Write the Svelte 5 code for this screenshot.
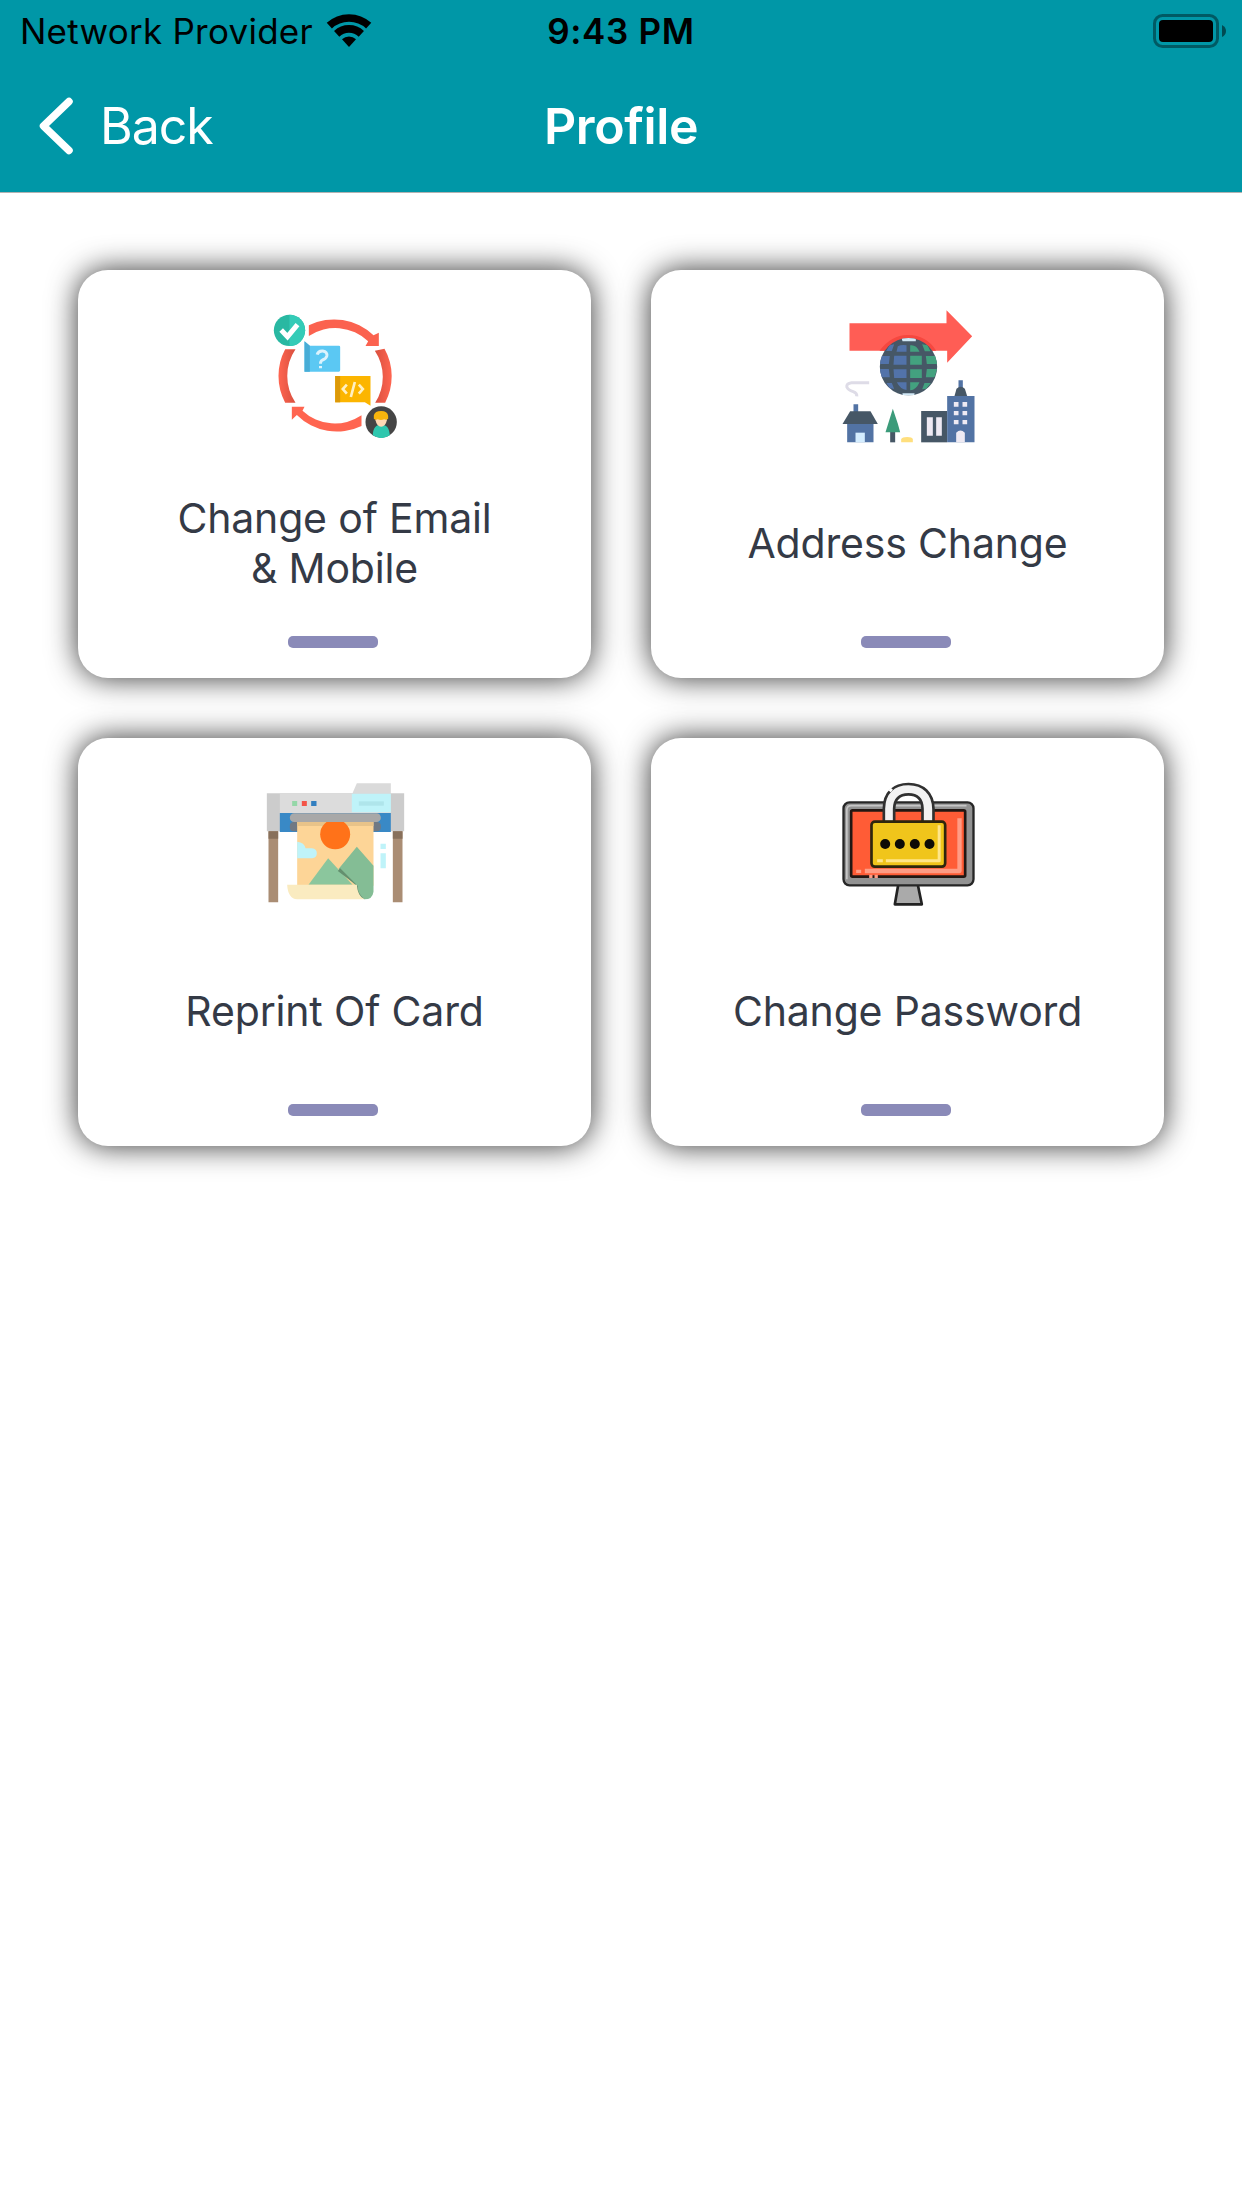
<script lang="ts">
	type Item = { id: string; lines: string[] };

	let {
		title = 'Profile',
		carrier = 'Network Provider',
		time = '9:43 PM',
		onBack = () => {}
	}: {
		title?: string;
		carrier?: string;
		time?: string;
		onBack?: () => void;
	} = $props();

	const items: Item[] = [
		{ id: 'contact', lines: ['Change of Email', '& Mobile'] },
		{ id: 'address', lines: ['Address Change'] },
		{ id: 'reprint', lines: ['Reprint Of Card'] },
		{ id: 'password', lines: ['Change Password'] }
	];
</script>

<div class="screen">
	<header class="header">
		<div class="status">
			<div class="status-left">
				<span class="carrier">{carrier}</span>
				<svg class="wifi" viewBox="978 36 138 105" fill="none" stroke="#000" stroke-width="23">
					<path d="M988 74A87 87 0 0 1 1106 74" />
					<path d="M1010 98.500A54 54 0 0 1 1084 98.500" />
					<path d="M1047 138L1026 115A31 31 0 0 1 1068 115Z" fill="#000" stroke="none" />
				</svg>
			</div>
			<span class="time">{time}</span>
			<svg class="battery" viewBox="0 0 74 34">
				<rect x="1.500" y="1.500" width="63" height="31" rx="8" fill="none" stroke="#000" stroke-opacity=".4" stroke-width="3" />
				<rect x="6" y="6" width="54" height="22" rx="4" />
				<path d="M69 11Q73 13 73 17T69 23Z" opacity=".5" />
			</svg>
		</div>

		<nav class="navbar">
			<button class="back" onclick={onBack}>
				<svg class="chevron" viewBox="0 0 34 58">
					<path d="M30 4.500L4.500 29L30 53.500" fill="none" stroke="#fff" stroke-width="7.500" stroke-linecap="round" stroke-linejoin="round" />
				</svg>
				<span>Back</span>
			</button>
			<h1 class="title">{title}</h1>
		</nav>
	</header>

	<main class="grid">
		{#each items as item (item.id)}
			<button class="card">
				{#if item.id === 'contact'}
					<svg class="icon" viewBox="-1.500 0 450 450">
						<defs>
							<linearGradient id="ringL"><stop offset="0" stop-color="#ff6550" /><stop offset="1" stop-color="#d9503f" /></linearGradient>
							<linearGradient id="ringR"><stop offset="0" stop-color="#d9503f" /><stop offset="1" stop-color="#ff6550" /></linearGradient>
						</defs>
						<path d="M77 148A170 170 0 0 0 77 308L108 308A142 142 0 0 1 108 148Z" fill="url(#ringL)" />
						<path d="M375 146A170 170 0 0 1 377 308L347 308A142 142 0 0 0 346 152Z" fill="url(#ringR)" />
						<path d="M148 76A170 170 0 0 1 342 106L358 98V138H318L326 124A142 142 0 0 0 148 108Z" fill="#fb624f" />
						<path d="M306 378A170 170 0 0 1 112 345L97 359V320H135L129 332A142 142 0 0 0 306 346Z" fill="#ff6550" />
						<circle cx="90" cy="91" r="47" fill="#29b8a2" />
						<path d="M90 44A47 47 0 0 1 90 138Z" fill="#34cbb7" />
						<path d="M65 90L84 110L114 74" fill="none" stroke="#fff" stroke-width="15" />
						<path d="M135 124L151 137H238Q242 137 242 141V211Q242 215 238 215H135Z" fill="#5bc8f3" />
						<path d="M135 124L151 137V215H135Z" fill="#48add6" />
						<path d="M173 164Q176 152 190 153Q204 155 202 168Q200 176 189 180Q183 183 183 191M183 198V205" fill="none" stroke="#dcf3fd" stroke-width="9" />
						<path d="M227 228H333V317L316 307H227Z" fill="#fcb500" />
						<path d="M227 228H242V307H227Z" fill="#dc9909" />
						<path d="M262 254L250 267L262 281M298 254L310 267L298 281M286 246L274 291" fill="none" stroke="#fff0c2" stroke-width="8" />
						<circle cx="365" cy="366" r="47" fill="#454545" />
						<path d="M340 408C340 382 350 374 365 374S390 382 391 406A47 47 0 0 1 340 406Z" fill="#2ec7ae" />
						<path d="M348 350H382V361Q378 380 365 380T348 361Z" fill="#ffd9b5" />
						<path d="M343 356V346Q346 333 365 333T386 348V356Q380 361 374 358Q364 362 355 358Q348 361 343 356Z" fill="#f8b50d" />
					</svg>
				{:else if item.id === 'address'}
					<svg class="icon" viewBox="7.500 0 450 450">
						<path d="M60 70H351V31L428 109L353 188V152H60Z" fill="#ff5d55" />
						<path d="M150 152Q188 103 237 105Q290 105 320 152Z" fill="#f6473f" />
						<circle cx="237" cy="200" r="86" fill="#465766" />
						<clipPath id="globe"><circle cx="237" cy="200" r="86" /></clipPath>
						<g clip-path="url(#globe)">
							<path d="M215 110H259V124H219ZM219 280H255V290H219Z" fill="#d2e9f6" />
							<path d="M205 139Q216 133 231 136V155H201ZM194 167H231V194H192ZM192 208H231V234H194ZM202 247H231V270Q213 269 202 247ZM151 168H181L178 192H151ZM151 207H178L181 232H151ZM171 249H187L194 267L180 264ZM180 136L194 133L187 153H170Z" fill="#5273aa" />
							<path d="M242 136Q260 133 270 155H242ZM242 167H277V194H242ZM242 208H277V234H242ZM242 247H270Q260 270 242 271ZM289 168H323V192H292ZM292 207H323L315 232H289ZM285 249H304L290 266L278 268ZM278 133L294 136L303 154H286Z" fill="#43a17f" />
						</g>
						<path d="M119 248H66Q50 250 52 261Q56 270 71 275Q83 279 82 289" fill="none" stroke="#dedce7" stroke-width="9" />
						<path d="M72 313H86V345H72ZM53 370H132V427H53Z" fill="#5273a4" />
						<path d="M39 372L62 334H123L145 372Z" fill="#465766" />
						<path d="M78 427V398H106V427Z" fill="#d4edff" />
						<path d="M182 390H197V427H182Z" fill="#465766" />
						<path d="M190 326L205 371L212 397H168L176 371Z" fill="#3c9b7a" />
						<path d="M215 427V417Q218 411 233 411T250 417V427Z" fill="#ffdf7d" />
						<path d="M275 333H353V427H275Z" fill="#465766" />
						<path d="M292 352H310V407H292ZM320 352H337V407H320Z" fill="#eeeaf3" />
						<path d="M353 288H435V427H353ZM387 241H400V267H387Z" fill="#5273a4" />
						<path d="M375 288L381 266Q394 254 406 266L413 288Z" fill="#465766" />
						<path d="M373 306H387V320H373ZM399 306H413V320H399ZM373 333H387V346H373ZM399 333H413V346H399ZM373 360H387V373H373ZM399 360H413V373H399ZM380 427V398Q393 385 406 398V427Z" fill="#eeeaf3" />
					</svg>
				{:else if item.id === 'reprint'}
					<svg class="icon" viewBox="13.500 -6 450 450">
						<path d="M294 70L307 40H409V72H294Z" fill="#dadada" />
						<path d="M37 70H449V184H37Z" fill="#ccc" />
						<path d="M76 70H409V130H76Z" fill="#dcdcdc" />
						<path d="M76 129H409V186H76Z" fill="#3989c6" />
						<path d="M292 71H409V127H292Z" fill="#bff3f9" />
						<path d="M313 94H388V107H313Z" fill="#afe5eb" />
						<path d="M113 93H128V108H113Z" fill="#94d7a8" />
						<path d="M142 93H157V108H142Z" fill="#f35448" />
						<path d="M170 93H186V108H170Z" fill="#327fc0" />
						<path d="M42 184H71V397H42ZM415 184H444V397H415Z" fill="#aa8d74" />
						<path d="M42 184H71V206H42ZM415 184H444V206H415Z" fill="#88705b" />
						<rect x="106" y="156" width="273" height="28" rx="12" fill="#707984" />
						<path d="M128 150H357V347H128Z" fill="#fdd597" />
						<path d="M128 150H357V168H128Z" fill="#e8c389" />
						<circle cx="242" cy="193" r="45" fill="#ff7219" />
						<rect x="106" y="130" width="273" height="26" rx="13" fill="#a8a8a8" />
						<path d="M128 215Q150 217 153 235H172Q187 237 187 250T173 265H128Z" fill="#bff3f9" />
						<path d="M162 344L221 265L294 344Z" fill="#8bc69d" />
						<path d="M252 297L307 230L357 287V365Q354 388 330 388Q312 386 308 350Z" fill="#84bd95" />
						<path d="M257 295L310 348Q309 371 330 388Q310 385 305 345L250 303Z" fill="#64906f" />
						<path d="M98 344H307Q309 378 330 388H128Q100 385 98 344Z" fill="#faebc0" />
						<path d="M378 221H394V237H378ZM378 250H394V295H378Z" fill="#bff3f9" />
					</svg>
				{:else}
					<svg class="icon" viewBox="7.500 -6 450 450" stroke-linejoin="round">
						<path d="M207 340H264L277 403H196Z" fill="#aaa" stroke="#222" stroke-width="8" />
						<rect x="42" y="97" width="390" height="249" rx="18" fill="#929292" stroke="#262626" stroke-width="7" />
						<path d="M52 328V119Q53 107 65 107H411" fill="none" stroke="#c7c7c7" stroke-width="5" />
						<rect x="65" y="121" width="342" height="199" rx="4" fill="#ff5c36" stroke="#221713" stroke-width="8" />
						<path d="M390 145V303H106" fill="none" stroke="#ff9c85" stroke-width="13" />
						<path d="M80 304H95M119 319H129M135 319H145" stroke="#ff9c85" stroke-width="10" />
						<path d="M163 156V116C164 67 193 42 237 42S311 69 312 117V156H279V116C278 87 263 73 237 73S195 87 194 116V156Z" fill="#f2f2f2" stroke="#303030" stroke-width="8" />
						<path d="M180 64L187 56" stroke="#fff" stroke-width="9" />
						<rect x="126" y="155" width="221" height="135" rx="10" fill="#f0c51b" stroke="#2e260d" stroke-width="8" />
						<path d="M329 166V272H169M143 272H160" fill="none" stroke="#ffe68a" stroke-width="9" />
						<g fill="#0d0b06">
							<circle cx="167" cy="222" r="15" />
							<circle cx="211" cy="222" r="15" />
							<circle cx="256" cy="222" r="15" />
							<circle cx="300" cy="222" r="15" />
						</g>
					</svg>
				{/if}
				<span class="label">
					{#each item.lines as line}
						<span>{line}</span>
					{/each}
				</span>
				<span class="bar"></span>
			</button>
		{/each}
	</main>
</div>

<style>
	:global(body) {
		margin: 0;
		background: #fff;
	}

	.screen {
		width: 1242px;
		height: 2208px;
		overflow: hidden;
		background: #fff;
		font-family: Inter, 'Liberation Sans', sans-serif;
	}

	button {
		margin: 0;
		padding: 0;
		border: 0;
		background: none;
		font: inherit;
		color: inherit;
		cursor: pointer;
	}

	.header {
		box-sizing: border-box;
		height: 193px;
		background: #0097a7;
		border-bottom: 1px solid #b2b2b2;
	}

	.status {
		display: grid;
		grid-template-columns: 1fr auto 1fr;
		align-items: center;
		height: 60px;
		padding: 0 15px 0 15px;
		color: #000;
		font-size: 35px;
		line-height: 60px;
	}

	.status-left {
		display: flex;
		align-items: center;
		gap: 13px;
		padding-left: 5px;
	}

	.carrier {
		padding-top: 1px;
		letter-spacing: 0.25px;
	}

	.wifi {
		width: 46px;
		height: 35px;
	}

	.time {
		padding-top: 1px;
		font-weight: 600;
		letter-spacing: 0.7px;
	}

	.battery {
		width: 74px;
		height: 34px;
		justify-self: end;
	}

	.navbar {
		display: grid;
		grid-template-columns: 1fr auto 1fr;
		align-items: center;
		height: 132px;
		padding: 0 39px;
		color: #fff;
	}

	.back {
		display: flex;
		align-items: center;
		gap: 27px;
		font-size: 50px;
		letter-spacing: -1px;
	}

	.chevron {
		width: 34px;
		height: 58px;
	}

	.title {
		margin: 0;
		font-size: 50px;
		font-weight: 600;
		letter-spacing: -0.4px;
	}

	.grid {
		display: grid;
		grid-template-columns: 513px 513px;
		grid-auto-rows: 408px;
		gap: 60px;
		padding: 77px 78px;
	}

	.card {
		display: flex;
		flex-direction: column;
		align-items: center;
		box-sizing: border-box;
		padding: 30px 0;
		border-radius: 30px;
		background: #fff;
		box-shadow: 0 0 30px rgba(0, 0, 0, 0.8);
	}

	.icon {
		width: 150px;
		height: 150px;
		margin-right: 2px;
		filter: blur(0.7px);
	}

	.label {
		display: flex;
		flex: 1;
		flex-direction: column;
		align-items: center;
		justify-content: center;
		color: #343a46;
		font-size: 41px;
		line-height: 50px;
		letter-spacing: -0.17px;
	}

	.bar {
		width: 90px;
		height: 12px;
		margin-right: 3px;
		border-radius: 5px;
		background: #8a8ab8;
	}
</style>
